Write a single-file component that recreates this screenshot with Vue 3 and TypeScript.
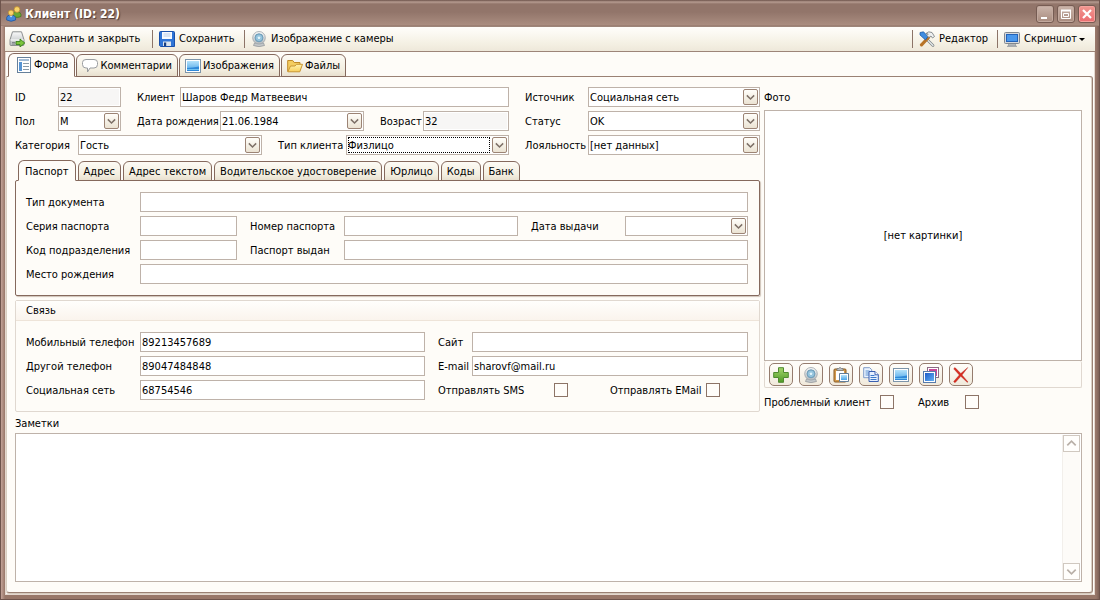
<script setup lang="ts">
import { ref } from 'vue'

interface Tab { id: string; title: string; icon?: string }

const mainTabs: Tab[] = [
  { id: 'form', title: 'Форма', icon: 'i-form' },
  { id: 'comments', title: 'Комментарии', icon: 'i-comment' },
  { id: 'images', title: 'Изображения', icon: 'i-image' },
  { id: 'files', title: 'Файлы', icon: 'i-folder' },
]
const docTabs: Tab[] = [
  { id: 'passport', title: 'Паспорт' },
  { id: 'address', title: 'Адрес' },
  { id: 'addressText', title: 'Адрес текстом' },
  { id: 'driver', title: 'Водительское удостоверение' },
  { id: 'company', title: 'Юрлицо' },
  { id: 'codes', title: 'Коды' },
  { id: 'bank', title: 'Банк' },
]
const photoTools: Tab[] = [
  { id: 'add', title: 'Добавить', icon: 'i-plus' },
  { id: 'camera', title: 'Камера', icon: 'i-camera' },
  { id: 'paste', title: 'Вставить', icon: 'i-paste' },
  { id: 'copy', title: 'Копировать', icon: 'i-copy' },
  { id: 'view', title: 'Просмотр', icon: 'i-image' },
  { id: 'windows', title: 'Окна', icon: 'i-windows' },
  { id: 'remove', title: 'Удалить', icon: 'i-remove' },
]

const activeMain = ref('form')
const activeDoc = ref('passport')
const client = ref({
  id: '22',
  name: 'Шаров Федр Матвеевич',
  birth: '21.06.1984',
  age: '32',
  mobile: '89213457689',
  phone: '89047484848',
  social: '68754546',
  site: '',
  email: 'sharovf@mail.ru',
  notes: '',
})
</script>

<template>
  <svg class="defs" aria-hidden="true">
    <defs>
      <linearGradient id="g-blue" x1="0" y1="0" x2="0" y2="1"><stop offset="0" stop-color="#b4e2fa" /><stop offset="1" stop-color="#4aa4e8" /></linearGradient>
      <linearGradient id="g-deep" x1="0" y1="0" x2="1" y2="1"><stop offset="0" stop-color="#1f5cc8" /><stop offset="1" stop-color="#62b0f4" /></linearGradient>
      <linearGradient id="g-green" x1="0" y1="0" x2="0" y2="1"><stop offset="0" stop-color="#a5d66c" /><stop offset="1" stop-color="#4f9a26" /></linearGradient>
      <linearGradient id="g-grey" x1="0" y1="0" x2="0" y2="1"><stop offset="0" stop-color="#fafafa" /><stop offset="1" stop-color="#b4b8ba" /></linearGradient>
      <linearGradient id="g-gold" x1="0" y1="0" x2="0" y2="1"><stop offset="0" stop-color="#fff3b0" /><stop offset="1" stop-color="#f8cf5c" /></linearGradient>
      <radialGradient id="g-lens"><stop offset="0" stop-color="#ffffff" /><stop offset=".5" stop-color="#a4d2ea" /><stop offset="1" stop-color="#7ba9c4" /></radialGradient>
    </defs>
    <symbol id="i-users" viewBox="0 0 16 16">
      <path d="M6.5 10V7.5Q7 5.5 10.500 5.500 14.500 5.500 15 8.500V10.500Q12 12 8 11Z" fill="#69a834" stroke="#3c741a" stroke-width=".7" />
      <circle cx="11" cy="3.500" r="2.900" fill="#f8d46a" stroke="#b9822a" stroke-width=".7" />
      <path d="M.7 14V11.500Q1 9 5 9T9.600 11.500V14Q5 16.500 .7 14Z" fill="#4389dc" stroke="#174c97" stroke-width=".7" />
      <path d="M3.500 9.300 5 11.500 6.600 9.300Z" fill="#dcecff" />
      <circle cx="5" cy="6.800" r="2.700" fill="#f8d46a" stroke="#b9822a" stroke-width=".7" />
    </symbol>
    <symbol id="i-saveclose" viewBox="0 0 16 16">
      <path d="M3.500 .8h9l2.500 8v4.700q0 1-1 1h-12q-1 0-1-1v-4.700Z" fill="url(#g-grey)" stroke="#8c8f91" />
      <path d="M1.500 9h13" stroke="#fff" />
      <path d="M3 11.500h3M3 13h3" stroke="#80868a" />
      <path d="M7 10.500h4V8l4.800 4-4.800 4v-2.500h-4Z" fill="#7cc43c" stroke="#2f7911" stroke-width=".8" />
    </symbol>
    <symbol id="i-save" viewBox="0 0 16 16">
      <path d="M.5 1.500q0-1 1-1h13q1 0 1 1v14h-14l-1-1Z" fill="#2f74d6" stroke="#1a50aa" />
      <path d="M3 1h10v7H3Z" fill="#f7faff" />
      <path d="M4.500 3h7M4.500 5h7" stroke="#b9cde8" />
      <path d="M4 10.500h8V15H4Z" fill="#dbe4ed" />
      <path d="M5 11.500h2.200V15H5Z" fill="#163e83" />
    </symbol>
    <symbol id="i-camera" viewBox="0 0 16 16">
      <path d="M3.500 12h9l1 2.500Q8 16.800 2.500 14.500Z" fill="#c4c8ca" stroke="#8c9295" stroke-width=".7" />
      <circle cx="8" cy="6.800" r="6.300" fill="url(#g-grey)" stroke="#9aa3a9" stroke-width=".8" />
      <circle cx="8" cy="6.800" r="4" fill="url(#g-lens)" stroke="#6f9fba" />
      <circle cx="8" cy="6.800" r="1.800" fill="#e2f5fc" stroke="#7db3d0" stroke-width=".7" />
    </symbol>
    <symbol id="i-tools" viewBox="0 0 16 16">
      <path d="M6 6.500 14 14.500" stroke="#7b8184" stroke-width="2.600" stroke-linecap="round" />
      <path d="M6 6.500 14 14.500" stroke="#e8ecee" stroke-width="1.200" stroke-linecap="round" />
      <path d="M9.500 6.500 2.500 13.800" stroke="#b87428" stroke-width="3.200" stroke-linecap="round" />
      <path d="M1 1.500 4.500 .8 9 5.500 6.500 9 1 4Z" fill="#3f8de0" stroke="#17539f" stroke-width=".7" />
      <path d="M7 2.500Q9.500-.3 13 1.500l2.500 4-2 1.500-1.500-2-2 1.500-2-2 1.200-1.500Z" fill="#eef0f1" stroke="#70777b" stroke-width=".8" />
    </symbol>
    <symbol id="i-monitor" viewBox="0 0 16 16">
      <path d="M5 12h6l1 3H4Z" fill="#b4b8bb" stroke="#888d90" stroke-width=".6" />
      <rect x=".5" y="1.500" width="15" height="11" rx="1" fill="#d6d9dc" stroke="#82888e" />
      <rect x="2.500" y="3.500" width="11" height="7" fill="#4a98ec" stroke="#2463b8" />
      <path d="M3 15.500h10" stroke="#a7abae" />
    </symbol>
    <symbol id="i-form" viewBox="0 0 16 16">
      <rect x="1.500" y=".5" width="13" height="15" fill="#fff" stroke="#66809a" />
      <path d="M3 2h10v2H3Z" fill="#a3bcd5" />
      <path d="M3 5h3v9H3Z" fill="#5794d2" />
      <path d="M7 6.500h6M7 9.500h6M7 12.500h6" stroke="#8a9aa6" />
    </symbol>
    <symbol id="i-comment" viewBox="0 0 16 16">
      <path d="M4 1.500h8Q15.500 1.500 15.500 4.500v2Q15.500 10 12 10H8L5.500 14V10H4Q.5 10 .5 6.500V4.500Q.5 1.500 4 1.500Z" fill="#fff" stroke="#9a9da0" />
    </symbol>
    <symbol id="i-image" viewBox="0 0 16 16">
      <rect x=".5" y="1.500" width="15" height="13" fill="#fff" stroke="#7d95aa" />
      <rect x="2" y="3" width="12" height="10" fill="url(#g-blue)" />
      <path d="M2 10Q8 9.500 14 8.500v4.500H2Z" fill="#2f88d8" />
      <path d="M2 11.500h12" stroke="#83d0f6" stroke-width=".8" />
    </symbol>
    <symbol id="i-folder" viewBox="0 0 16 16">
      <path d="M.7 13.500V2.500h5l1.500 2H13v2" fill="#f4cd60" stroke="#c08a28" />
      <path d="M.8 13.800 3.500 8h4.500l1.500-1.700h6L12.800 13.800Z" fill="url(#g-gold)" stroke="#c99632" />
    </symbol>
    <symbol id="i-plus" viewBox="0 0 16 16">
      <path d="M5.500.7h5v4.800h4.800v5h-4.800v4.800h-5v-4.800H.7v-5h4.800Z" fill="url(#g-green)" stroke="#4f8a30" />
    </symbol>
    <symbol id="i-paste" viewBox="0 0 16 16">
      <rect x="1" y="2" width="12" height="13" rx="1" fill="#d49a4b" stroke="#895b25" />
      <rect x="3" y="4" width="8" height="9" fill="#fff" />
      <path d="M4 3.500V1.500h1.500Q7-.7 8.500 1.500H10v2Z" fill="#b9bec2" stroke="#70757a" stroke-width=".7" />
      <path d="M6.500 6.500h9v8h-9Z" fill="#fff" stroke="#617d99" />
      <path d="M8 8h6v5H8Z" fill="url(#g-blue)" />
    </symbol>
    <symbol id="i-copy" viewBox="0 0 16 16">
      <path d="M.7.700h6l2 2v8H.7Z" fill="#eaf3ff" stroke="#7f9cc8" />
      <path d="M2.500 4h4M2.500 6h4M2.500 8h4" stroke="#5b91d0" />
      <path d="M6 4.500h6l3.300 3.300v6.700H6Z" fill="#e6f0ff" stroke="#3a5fb0" />
      <path d="M12 4.500v3.300h3.300" fill="#fff" stroke="#3a5fb0" />
      <path d="M7.500 8.500h4M7.500 10.500h6M7.500 12.500h6" stroke="#3d7ac9" />
    </symbol>
    <symbol id="i-windows" viewBox="0 0 16 16">
      <rect x="4.500" y=".5" width="11" height="10" fill="#fff" stroke="#8c6c85" />
      <rect x="6" y="2" width="8" height="7" fill="#c9479a" />
      <rect x=".5" y="4.500" width="12" height="11" fill="#fff" stroke="#587bab" />
      <rect x="2" y="6" width="9" height="8" fill="url(#g-deep)" />
    </symbol>
    <symbol id="i-remove" viewBox="0 0 16 16">
      <path d="M.7 1.800 2 .6 7.800 6.500 14.800.5 9 8l6 7-.8.300L7.800 9.300 2.500 15.300Q1.200 15.800.7 14.500L6.300 8Z" fill="#d92c20" stroke="#b0211a" stroke-width=".4" />
    </symbol>
    <symbol id="i-down" viewBox="0 0 16 16">
      <path d="M3.500 6 8 10.500 12.500 6" fill="none" stroke="currentColor" stroke-width="1.800" />
    </symbol>
  </svg>

  <div class="window">
    <header class="titlebar">
      <svg class="icon"><use href="#i-users" /></svg>
      <h1>Клиент (ID: 22)</h1>
      <button class="sys" type="button" aria-label="Свернуть"><svg viewBox="0 0 16 16"><path d="M4 12h6" stroke="#fff" stroke-width="2" /></svg></button>
      <button class="sys" type="button" aria-label="Развернуть"><svg viewBox="0 0 16 16"><path d="M3.500 4v8.500h9V4" fill="none" stroke="#fff" /><path d="M3 4.500h10" stroke="#fff" stroke-width="2" /><path d="M5.500 7.500h5v3h-5Z" fill="none" stroke="#fff" /></svg></button>
      <button class="sys close" type="button" aria-label="Закрыть"><svg viewBox="0 0 16 16"><path d="m4 4 8 8M12 4l-8 8" stroke="#fff" stroke-width="2.200" /></svg></button>
    </header>

    <div class="body">
      <nav class="toolbar">
        <button class="b137" type="button"><svg class="icon"><use href="#i-saveclose" /></svg>Сохранить и закрыть</button>
        <i class="sep" />
        <button class="b79" type="button"><svg class="icon"><use href="#i-save" /></svg>Сохранить</button>
        <i class="sep" />
        <button type="button"><svg class="icon"><use href="#i-camera" /></svg>Изображение с камеры</button>
        <span class="spring" />
        <i class="sep" />
        <button class="b72" type="button"><svg class="icon"><use href="#i-tools" /></svg>Редактор</button>
        <i class="sep" />
        <button class="b87" type="button"><svg class="icon"><use href="#i-monitor" /></svg>Скриншот<i class="caret" /></button>
      </nav>

      <div class="tabs main-tabs" role="tablist">
        <button v-for="t in mainTabs" :key="t.id" type="button" role="tab" class="tab" :class="{ active: activeMain === t.id }" :aria-selected="activeMain === t.id" @click="activeMain = t.id">
          <svg class="icon"><use :href="'#' + t.icon" /></svg>{{ t.title }}
        </button>
      </div>

      <main class="panel">
        <div class="upper">
          <div class="left">
            <div class="summary">
              <div class="rows">
                <div class="row">
                  <label class="w43" for="id">ID</label>
                  <input id="id" v-model="client.id" class="f63 ro" readonly />
                  <label class="w43 next" for="name">Клиент</label>
                  <input id="name" v-model="client.name" class="grow" />
                </div>
                <div class="row">
                  <label class="w43" for="sex">Пол</label>
                  <span class="combo f63"><select id="sex"><option>М</option><option>Ж</option></select><span class="arrow"><svg><use href="#i-down" /></svg></span></span>
                  <label class="w83 next" for="birth">Дата рождения</label>
                  <span class="combo grow"><input id="birth" v-model="client.birth" /><button class="arrow" type="button" aria-label="Календарь"><svg><use href="#i-down" /></svg></button></span>
                  <label class="w43 next" for="age">Возраст</label>
                  <input id="age" v-model="client.age" class="f86 ro" readonly />
                </div>
                <div class="row">
                  <label class="w63" for="cat">Категория</label>
                  <span class="combo grow"><select id="cat"><option>Гость</option></select><span class="arrow"><svg><use href="#i-down" /></svg></span></span>
                  <label class="w68 next" for="type">Тип клиента</label>
                  <span class="combo focused f163"><select id="type"><option>Физлицо</option></select><span class="arrow"><svg><use href="#i-down" /></svg></span></span>
                </div>
              </div>
              <div class="rows">
                <div class="row">
                  <label class="w63" for="source">Источник</label>
                  <span class="combo grow"><select id="source"><option>Социальная сеть</option></select><span class="arrow"><svg><use href="#i-down" /></svg></span></span>
                </div>
                <div class="row">
                  <label class="w63" for="status">Статус</label>
                  <span class="combo grow"><select id="status"><option>OK</option></select><span class="arrow"><svg><use href="#i-down" /></svg></span></span>
                </div>
                <div class="row">
                  <label class="w63" for="loyal">Лояльность</label>
                  <span class="combo grow"><select id="loyal"><option>[нет данных]</option></select><span class="arrow"><svg><use href="#i-down" /></svg></span></span>
                </div>
              </div>
            </div>

            <div class="tabs doc-tabs" role="tablist">
              <button v-for="t in docTabs" :key="t.id" type="button" role="tab" class="tab" :class="{ active: activeDoc === t.id }" :aria-selected="activeDoc === t.id" @click="activeDoc = t.id">{{ t.title }}</button>
            </div>
            <section class="doc rows">
              <div class="row">
                <label class="w114" for="doctype">Тип документа</label>
                <input id="doctype" class="grow" />
              </div>
              <div class="row">
                <label class="w114" for="series">Серия паспорта</label>
                <input id="series" class="f97" />
                <label class="w94 gap" for="number">Номер паспорта</label>
                <input id="number" class="grow" />
                <label class="w94 gap" for="issued">Дата выдачи</label>
                <span class="combo f123"><input id="issued" /><button class="arrow" type="button" aria-label="Календарь"><svg><use href="#i-down" /></svg></button></span>
              </div>
              <div class="row">
                <label class="w114" for="code">Код подразделения</label>
                <input id="code" class="f97" />
                <label class="w94 gap" for="issuer">Паспорт выдан</label>
                <input id="issuer" class="grow" />
              </div>
              <div class="row">
                <label class="w114" for="place">Место рождения</label>
                <input id="place" class="grow" />
              </div>
            </section>

            <section class="contact">
              <h2>Связь</h2>
              <div class="contact-grid">
                <div class="rows">
                  <div class="row"><label class="w114" for="mobile">Мобильный телефон</label><input id="mobile" v-model="client.mobile" class="grow" /></div>
                  <div class="row"><label class="w114" for="phone">Другой телефон</label><input id="phone" v-model="client.phone" class="grow" /></div>
                  <div class="row"><label class="w114" for="social">Социальная сеть</label><input id="social" v-model="client.social" class="grow" /></div>
                </div>
                <div class="rows">
                  <div class="row"><label class="w34" for="site">Сайт</label><input id="site" v-model="client.site" class="grow" /></div>
                  <div class="row"><label class="w34" for="email">E-mail</label><input id="email" v-model="client.email" class="grow" /></div>
                  <div class="row checks">
                    <label class="w116" for="sms">Отправлять SMS</label><input id="sms" type="checkbox" />
                    <label class="w96 far" for="mailing">Отправлять EMail</label><input id="mailing" type="checkbox" />
                  </div>
                </div>
              </div>
            </section>
          </div>

          <aside class="photo">
            <h2>Фото</h2>
            <div class="picture">[нет картинки]</div>
            <div class="photo-tools">
              <button v-for="t in photoTools" :key="t.id" type="button" :aria-label="t.title"><svg class="icon"><use :href="'#' + t.icon" /></svg></button>
            </div>
            <div class="row checks flags">
              <label class="w116" for="problem">Проблемный клиент</label><input id="problem" type="checkbox" />
              <label class="w47 mid" for="archive">Архив</label><input id="archive" type="checkbox" />
            </div>
          </aside>
        </div>

        <label class="notes-label" for="notes">Заметки</label>
        <div class="notes">
          <textarea id="notes" v-model="client.notes" />
          <div class="scroll">
            <button type="button" aria-label="Вверх"><svg class="flip"><use href="#i-down" /></svg></button>
            <button type="button" aria-label="Вниз"><svg><use href="#i-down" /></svg></button>
          </div>
        </div>
      </main>
    </div>
  </div>
</template>

<style>
body { margin: 0; }
</style>

<style scoped>
.defs { position: absolute; width: 0; height: 0; }
.window {
  box-sizing: border-box;
  display: flex;
  flex-direction: column;
  min-height: 100vh;
  padding: 0 4px 4px;
  border: 1px solid #6e544c;
  border-top: 0;
  background: linear-gradient(90deg, #c3a398 0, #987769 4px, #987769 calc(100% - 3px), #7d6157 100%);
  font: 11px/14px "DejaVu Sans Condensed", "DejaVu Sans", sans-serif;
  color: #000;
}
.window *, .window *::before { box-sizing: border-box; }
button, input, select, textarea { margin: 0; font: inherit; color: inherit; outline: 0; border-radius: 0; }
button { padding: 0; }
.icon { width: 16px; height: 16px; flex: none; }

.titlebar {
  display: flex;
  align-items: center;
  gap: 3px;
  height: 26px;
  margin: 0 -4px;
  padding: 2px 3px 0 5px;
  background: linear-gradient(#6c524a 0, #b79c91 2px, #92756a 4px, #92756a 12px, #aa8d80 25px, #917468 26px);
}
.titlebar h1 { flex: 1; margin: 0; font-size: 12px; line-height: 16px; font-weight: bold; color: #fff; text-shadow: 1px 1px 1px #4d3932; }
.sys { display: flex; width: 18px; height: 18px; border: 1px solid #765c53; border-radius: 3px; background: linear-gradient(#cbb5ab, #a88b7e); box-shadow: inset 0 0 0 1px #c2a99e; }
.sys svg { width: 16px; height: 16px; }
.sys.close { background: linear-gradient(#f09890, #ec6c70); box-shadow: inset 0 0 0 1px #f5a39e; }

.body { flex: 1; display: flex; flex-direction: column; background: #fefcf8; border: 1px solid #e4d8cf; border-top: 0; }
.toolbar { display: flex; align-items: center; height: 26px; border: 1px solid #9d8579; border-width: 1px 0; background: linear-gradient(#fffefb, #f4f0e3 70%, #eee8da); margin: 0 -1px; padding: 0 4px; }
.toolbar button { display: flex; align-items: center; gap: 4px; border: 0; background: none; white-space: nowrap; }
.toolbar .b72 { min-width: 72px; }
.toolbar .b79 { min-width: 79px; }
.toolbar .b87 { min-width: 87px; }
.toolbar .b137 { min-width: 137px; }
.sep { width: 1px; height: 18px; margin: 0 6px; background: #8c7468; }
.spring { flex: 1; }
.caret { border: 3px solid transparent; border-top-color: #000; border-bottom: 0; margin-left: -2px; }

.tabs { display: flex; align-items: flex-end; gap: 1px; position: relative; z-index: 1; }
.tab { display: flex; align-items: center; justify-content: center; border: 1px solid #85695d; border-radius: 6px 6px 0 0; background: linear-gradient(#fdfbf5, #f3eee0 70%, #e8e0cf); white-space: nowrap; }
.tab.active { background: #fefcf8; border-bottom-color: #fefcf8; }
.main-tabs { margin: 1px 0 -1px 2px; }
.main-tabs .tab { height: 23px; padding: 0 5px; gap: 2px; }
.main-tabs .tab.active { height: 24px; padding: 0 6px 0 7px; }
.panel { flex: 1; display: flex; flex-direction: column; margin: 0 1px 1px 0; padding: 10px 10px 10px 8px; border: 1px solid #9a8174; border-left-color: #d8cfc2; border-radius: 0 3px 3px 3px; box-shadow: 0 1px 0 #d5cabd, inset -1px 0 0 #d9cfc4; }

.upper { display: grid; grid-template-columns: minmax(0, 1fr) 318px; gap: 4px; }
.rows { display: flex; flex-direction: column; gap: 4px; }
.row { display: flex; align-items: center; min-height: 20px; }
.row label { flex: none; padding-top: 2px; white-space: nowrap; }
.row input, .combo { height: 20px; min-width: 0; flex: none; }
.row input, select { border: 1px solid #beb2a9; background: #fff; padding: 0 1px; }
.row .grow { flex: 1; }
.row .ro { background: #f7f6f5; box-shadow: inset 0 0 0 1px #fff; }
.combo { position: relative; display: flex; }
.combo select, .combo input { flex: 1; width: 100%; height: 20px; appearance: none; }
.combo select { padding-top: 2px; }
.combo.focused::before { content: ""; position: absolute; inset: 2px 19px 2px 2px; border: 1px dotted #000; pointer-events: none; }
.arrow { position: absolute; top: 2px; right: 2px; display: flex; width: 15px; height: 16px; border: 1px solid #9c8475; border-radius: 2px; background: linear-gradient(#fffefa, #ebe3d3); color: #7d7067; pointer-events: none; }
.arrow svg { width: 13px; height: 14px; }
.w34 { width: 34px; } .w43 { width: 43px; } .w47 { width: 47px; } .w63 { width: 63px; } .w68 { width: 68px; }
.w83 { width: 83px; } .w94 { width: 94px; } .w96 { width: 96px; } .w114 { width: 114px; } .w116 { width: 116px; }
.row .f63 { width: 63px; } .row .f86 { width: 86px; } .row .f97 { width: 97px; } .row .f123 { width: 123px; } .row .f163 { width: 163px; }
.next { margin-left: 16px; }
.gap { margin-left: 13px; }
.mid { margin-left: 24px; }
.far { margin-left: 42px; }

.summary { display: grid; grid-template-columns: minmax(0, 1fr) 235px; gap: 16px; }
.doc-tabs { gap: 2px; margin: 5px 0 -1px 3px; }
.doc-tabs .tab { height: 20px; padding: 2px 5px 0; }
.doc-tabs .tab.active { height: 21px; padding: 2px 6px 0; }
.doc { padding: 11px; padding-left: 10px; border: 1px solid #85695d; border-radius: 2px; box-shadow: 1px 1px 1px #cfc3b7; }
.contact { margin-top: 4px; border: 1px solid #e0d8d0; border-radius: 2px; }
.contact h2 { margin: 0; padding: 3px 10px 2px; border-bottom: 1px solid #eee4d9; background: linear-gradient(#fffefc, #faf4ed); font: inherit; }
.contact-grid { display: grid; grid-template-columns: minmax(0, 399fr) minmax(0, 310fr); gap: 13px; padding: 11px 11px 11px 10px; }
.row input[type="checkbox"] { appearance: none; width: 14px; height: 14px; border: 1px solid #8d7467; background: #fffdfa; padding: 0; }
.row input[type="checkbox"]:checked { background: #8d7467; box-shadow: inset 0 0 0 3px #fff; }

.photo { display: flex; flex-direction: column; }
.photo h2 { margin: 0; padding: 4px 0 5px; font: inherit; }
.picture { flex: 1; display: flex; align-items: center; justify-content: center; border: 1px solid #beb2a9; background: #fff; }
.photo-tools { display: flex; gap: 6px; padding: 2px 4px 1px; border: 1px solid #e0d8d0; border-top: 0; border-radius: 2px; }
.photo-tools button { display: flex; align-items: center; justify-content: center; width: 24px; height: 23px; border: 1px solid #957c6e; border-radius: 5px; background: linear-gradient(#fffefa, #f0e9db); }
.flags { margin-top: 4px; }

.notes-label { line-height: 14px; margin: 5px 0 2px; }
.notes { flex: 1; display: flex; border: 1px solid #beb2a9; background: #fff; min-height: 100px; }
.notes textarea { flex: 1; border: 0; resize: none; background: none; padding: 2px; }
.scroll { display: flex; flex-direction: column; justify-content: space-between; width: 18px; margin: 1px; background: #fdfbf8; border-left: 1px solid #f2efeb; }
.scroll button { display: flex; height: 17px; border: 1px solid #d0c8c0; background: #fffefc; color: #b9b0a8; }
.scroll svg { width: 15px; height: 15px; }
.flip { transform: rotate(180deg); }
</style>
